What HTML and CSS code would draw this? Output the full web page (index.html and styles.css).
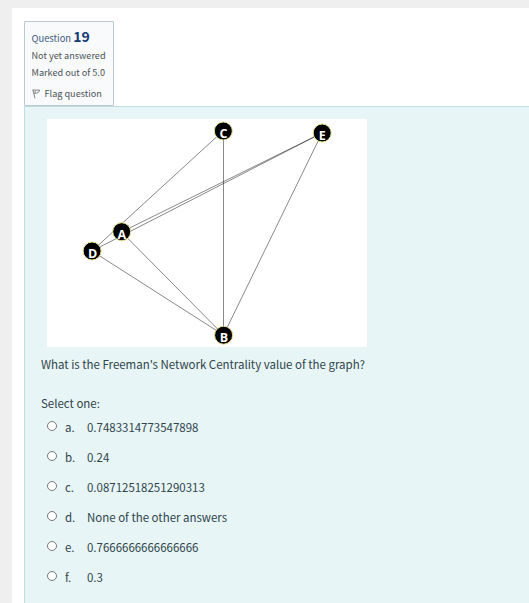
FILE: index.html
```
<!DOCTYPE html>
<html lang="en">
<head>
<meta charset="utf-8">
<title>Question 19</title>
<link rel="stylesheet" href="styles.css">
</head>
<body>
<main class="page">
  <section class="info">
    <h3 class="number">Question <b>19</b></h3>
    <div class="state"><span>Not yet answered</span></div>
    <div class="grade"><span>Marked out of 5.0</span></div>
    <div class="flag">
      <svg width="9" height="10" viewBox="0 0 9 10" fill="none" stroke="#777" stroke-width=".9"><path d="M.8.8 3 9.4M.7 1.1H7.8L6.4 3.4 4.2 4.3 2 4.3M3 1.5 3.3 3.8"/></svg>
      <span>Flag question</span>
    </div>
  </section>
  <section class="content">
    <svg class="graph" width="320" height="228" viewBox="47 119 320 228">
      <g class="edges">
        <path d="M223.5 131V335"/>
        <path d="M223 131 92 251M322 133 121.5 232M322 133 92 251M322 133 223.5 335M121.5 232 223.5 335M92 251 223.5 335"/>
      </g>
      <g class="nodes">
        <circle cx="223.3" cy="131" r="9"/><circle cx="322.2" cy="133" r="9"/><circle cx="121.7" cy="231.7" r="9"/><circle cx="92.1" cy="251" r="9"/><circle cx="223.6" cy="335.2" r="9"/>
      </g>
      <g class="names">
        <text x="223.5" y="138">C</text><text x="322.2" y="140">E</text><text x="121.7" y="238.5">A</text><text x="92.6" y="258">D</text><text x="224" y="342.3">B</text>
      </g>
    </svg>
    <p class="prompt"><span>What is the Freeman's Network Centrality value of the graph?</span></p>
    <p class="select"><span>Select one:</span></p>
    <div class="answers">
      <label class="answer"><input type="radio" name="q"><span class="letter">a.</span><span>0.7483314773547898</span></label>
      <label class="answer"><input type="radio" name="q"><span class="letter">b.</span><span>0.24</span></label>
      <label class="answer"><input type="radio" name="q"><span class="letter">c.</span><span>0.08712518251290313</span></label>
      <label class="answer"><input type="radio" name="q"><span class="letter">d.</span><span>None of the other answers</span></label>
      <label class="answer"><input type="radio" name="q"><span class="letter">e.</span><span>0.7666666666666666</span></label>
      <label class="answer"><input type="radio" name="q"><span class="letter">f.</span><span>0.3</span></label>
    </div>
  </section>
</main>
</body>
</html>
```
FILE: styles.css
```
* { box-sizing: border-box; }
body {
  margin: 0;
  padding: 8px 0 0 12px;
  height: 603px;
  overflow: hidden;
  background: #efefef;
  color: #2f444b;
  font: 11.47px/20px "Noto Sans CJK SC", "Open Sans", sans-serif;
}
.page {
  height: 595px;
  padding: 13px 0 0 12px;
  background: #fff;
}
.info {
  width: 90px;
  height: 85px;
  padding: 5px 0 0 6.5px;
  border: 1px solid #bcc9cf;
  border-radius: 1px;
  background: #f8fafc;
  color: #4c5356;
  font-size: 9.15px;
  line-height: 17px;
  white-space: nowrap;
}
.number {
  height: 20px;
  margin: 0;
  color: #41587c;
  font-size: 9.4px;
  font-weight: 400;
  line-height: 20px;
}
.number b { color: #143a73; font-size: 14px; line-height: 18px; }
.flag { display: flex; align-items: center; gap: 4px; height: 25px; }
.content {
  height: 498px;
  padding: 12px 0 0 16px;
  border: solid #bfdde1;
  border-width: 1px 0 0 1px;
  background: #e7f5f6;
}
.graph { display: block; margin-left: 6px; background: #fff; }
.edges { fill: none; stroke: #111; stroke-width: .5; }
.nodes { fill: #000; stroke: #e4e493; stroke-width: 1; }
.names { fill: #fff; font: bold 12.5px "Open Sans", sans-serif; text-anchor: middle; }
.prompt { height: 20px; margin: 7px 0 19px; }
.select { height: 20px; margin: 0 0 3px; }
.answer { display: flex; height: 30px; padding: 1px 0 0 6px; }
.answer input { width: 10px; height: 10px; margin: 4px 8px 0 0; }
.letter { width: 22px; }
```
